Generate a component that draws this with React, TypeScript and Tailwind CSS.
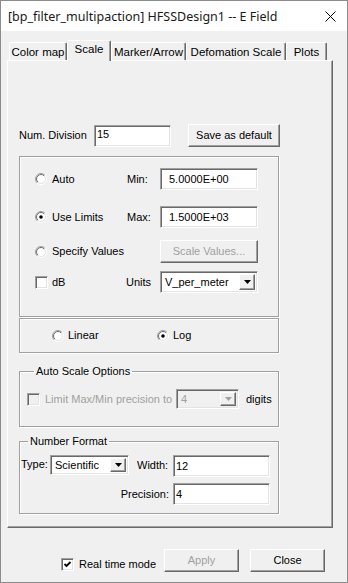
import React from "react";

const sunken =
  "bg-white border border-t-[#a0a0a0] border-l-[#a0a0a0] border-r-white border-b-white shadow-[inset_1px_1px_0_#696969,inset_-1px_-1px_0_#e3e3e3]";
const raised =
  "bg-[#f0f0f0] border border-t-white border-l-white border-r-[#696969] border-b-[#696969] shadow-[inset_-1px_-1px_0_#a0a0a0]";
const groupBox =
  "border border-[#a0a0a0] shadow-[inset_1px_1px_0_#fff,1px_1px_0_#fff]";

function Radio({ checked, id }: { checked?: boolean; id: string }) {
  return (
    <svg width="12" height="12" viewBox="0 0 12 12" className="shrink-0">
      <defs>
        <linearGradient id={`o${id}`} x1="0" y1="0" x2="1" y2="1">
          <stop offset="0.45" stopColor="#a0a0a0" />
          <stop offset="0.55" stopColor="#ffffff" />
        </linearGradient>
        <linearGradient id={`i${id}`} x1="0" y1="0" x2="1" y2="1">
          <stop offset="0.45" stopColor="#696969" />
          <stop offset="0.55" stopColor="#e3e3e3" />
        </linearGradient>
      </defs>
      <circle cx="6" cy="6" r="5.5" fill="none" stroke={`url(#o${id})`} />
      <circle cx="6" cy="6" r="4.5" fill="#fff" stroke={`url(#i${id})`} />
      {checked && <circle cx="6" cy="6" r="1.8" fill="#000" />}
    </svg>
  );
}

function Check({ checked, disabled }: { checked?: boolean; disabled?: boolean }) {
  return (
    <div
      className={`w-[13px] h-[13px] shrink-0 border border-t-[#a0a0a0] border-l-[#a0a0a0] border-r-white border-b-white shadow-[inset_1px_1px_0_#696969,inset_-1px_-1px_0_#e3e3e3] flex items-center justify-center ${
        disabled ? "bg-[#f0f0f0]" : "bg-white"
      }`}
    >
      {checked && (
        <svg width="9" height="9" viewBox="0 0 9 9">
          <path d="M1.5 4 L3.5 6 L7.5 2" stroke="#000" strokeWidth="1.8" fill="none" />
        </svg>
      )}
    </div>
  );
}

function Select({
  value,
  w,
  h,
  disabled,
}: {
  value: string;
  w: string;
  h: string;
  disabled?: boolean;
}) {
  return (
    <div className={`${w} ${h} ${sunken} ${disabled ? "!bg-[#f0f0f0] text-[#a0a0a0]" : ""} flex items-stretch p-[2px]`}>
      <div className="flex-1 flex items-center pl-[2px] leading-none">{value}</div>
      <div className={`w-[16px] ${raised} flex items-center justify-center`}>
        <svg width="7" height="4" viewBox="0 0 7 4">
          <path d="M0 0 H7 L3.5 4 Z" fill={disabled ? "#a0a0a0" : "#000"} />
        </svg>
      </div>
    </div>
  );
}

function Tab({ label, w, active }: { label: string; w: string; active?: boolean }) {
  return (
    <div
      className={`${w} ${
        active ? "h-[21px] relative z-10 -mb-[1px] bg-[#f0f0f0]" : "h-[18px]"
      } border-l border-t border-l-white border-t-white border-r border-r-[#696969] shadow-[inset_-1px_0_0_#a0a0a0] rounded-t-[2px] flex items-start justify-center pt-[2px]`}
    >
      <span className={active ? "" : "pt-[1px]"}>{label}</span>
    </div>
  );
}

export default function App() {
  return (
    <div className="w-[348px] h-[583px] bg-[#f0f0f0] border border-[#8c8c8c] flex flex-col font-['Liberation_Sans',Arial,sans-serif] text-[11px] text-black leading-[13px] overflow-hidden">
      {/* title bar */}
      <div className="h-[30px] bg-white flex items-center justify-between pl-[7px] pr-[11px] shrink-0">
        <span className="text-[12.5px] font-['Noto_Sans',sans-serif] text-[#1a1a1a]">
          [bp_filter_multipaction] HFSSDesign1 -- E Field
        </span>
        <svg width="11" height="11" viewBox="0 0 11 11">
          <path d="M0.5 0.5 L10.5 10.5 M10.5 0.5 L0.5 10.5" stroke="#000" strokeWidth="1" />
        </svg>
      </div>

      <div className="pl-[6px] pt-[8px] flex flex-col">
        {/* tabs */}
        <div className="flex items-end h-[21px] ml-[2px] text-[11.5px]">
          <Tab label="Color map" w="w-[58px]" />
          <Tab label="Scale" w="w-[44px]" active />
          <Tab label="Marker/Arrow" w="w-[75px]" />
          <Tab label="Defomation Scale" w="w-[100px]" />
          <Tab label="Plots" w="w-[41px]" />
        </div>

        {/* panel */}
        <div className="w-[326px] h-[468px] border border-t-white border-l-white border-r-[#696969] border-b-[#696969] shadow-[inset_-1px_-1px_0_#a0a0a0] pl-[11px] pt-[63px] flex flex-col">
          <div className="flex items-center">
            <span className="w-[75px]">Num. Division</span>
            <div className={`w-[77px] h-[22px] ${sunken} pl-[2px] pt-[2px]`}>15</div>
            <button className={`ml-[17px] w-[92px] h-[23px] ${raised}`}>Save as default</button>
          </div>

          {/* range group */}
          <div className={`mt-[9px] w-[260px] h-[161px] ${groupBox} pl-[15px] pt-[11px] flex flex-col`}>
            <div className="flex items-center h-[22px]">
              <div className="w-[92px] flex items-center">
                <Radio id="a" />
                <span className="ml-[5px]">Auto</span>
              </div>
              <span className="w-[33px]">Min:</span>
              <div className={`w-[98px] h-[22px] ${sunken} pl-[8px] flex items-center`}>5.0000E+00</div>
            </div>
            <div className="mt-[16px] flex items-center h-[22px]">
              <div className="w-[92px] flex items-center">
                <Radio id="b" checked />
                <span className="ml-[5px]">Use Limits</span>
              </div>
              <span className="w-[33px]">Max:</span>
              <div className={`w-[98px] h-[22px] ${sunken} pl-[8px] flex items-center`}>1.5000E+03</div>
            </div>
            <div className="mt-[12px] flex items-center h-[23px]">
              <div className="w-[125px] flex items-center">
                <Radio id="c" />
                <span className="ml-[5px]">Specify Values</span>
              </div>
              <button className={`w-[98px] h-[23px] ${raised} text-[#a0a0a0]`}>Scale Values...</button>
            </div>
            <div className="mt-[8px] flex items-center h-[22px]">
              <div className="w-[91px] flex items-center">
                <Check />
                <span className="ml-[4px]">dB</span>
              </div>
              <span className="w-[34px]">Units</span>
              <Select value="V_per_meter" w="w-[98px]" h="h-[22px]" />
            </div>
          </div>

          {/* linear / log */}
          <div className={`mt-[1px] w-[260px] h-[35px] ${groupBox} pl-[32px] flex items-center`}>
            <div className="w-[105px] flex items-center">
              <Radio id="d" />
              <span className="ml-[4px]">Linear</span>
            </div>
            <div className="flex items-center">
              <Radio id="e" checked />
              <span className="ml-[4px]">Log</span>
            </div>
          </div>

          {/* auto scale options */}
          <fieldset className={`mt-[12px] w-[260px] h-[62px] ${groupBox} pl-[7px]`}>
            <legend className="ml-[7px] px-[2px]">Auto Scale Options</legend>
            <div className="mt-[11px] flex items-center text-[#a0a0a0]">
              <Check disabled />
              <span className="ml-[5px] w-[131px]">Limit Max/Min precision to</span>
              <Select value="4" w="w-[63px]" h="h-[20px]" disabled />
              <span className="ml-[7px] text-black">digits</span>
            </div>
          </fieldset>

          {/* number format */}
          <fieldset className={`mt-[8px] w-[260px] h-[79px] ${groupBox} pl-[1px]`}>
            <legend className="ml-[7px] px-[2px]">Number Format</legend>
            <div className="mt-[7px] flex items-start">
              <span className="w-[29px] pt-[3px]">Type:</span>
              <Select value="Scientific" w="w-[79px]" h="h-[20px]" />
              <span className="ml-[8px] w-[36px] pt-[4px]">Width:</span>
              <div className={`w-[97px] h-[22px] ${sunken} pl-[2px] flex items-center`}>12</div>
            </div>
            <div className="mt-[6px] flex items-center">
              <span className="w-[152px] text-right pr-[4px]">Precision:</span>
              <div className={`w-[97px] h-[22px] ${sunken} pl-[2px] flex items-center`}>4</div>
            </div>
          </fieldset>
        </div>
      </div>

      {/* bottom bar */}
      <div className="mt-[21px] pl-[60px] flex items-start">
        <div className="w-[103px] flex items-center mt-[9px]">
          <Check checked />
          <span className="ml-[5px]">Real time mode</span>
        </div>
        <button className={`w-[75px] h-[23px] ${raised} text-[#a0a0a0]`}>Apply</button>
        <button className={`ml-[11px] w-[75px] h-[23px] ${raised}`}>Close</button>
      </div>
    </div>
  );
}
